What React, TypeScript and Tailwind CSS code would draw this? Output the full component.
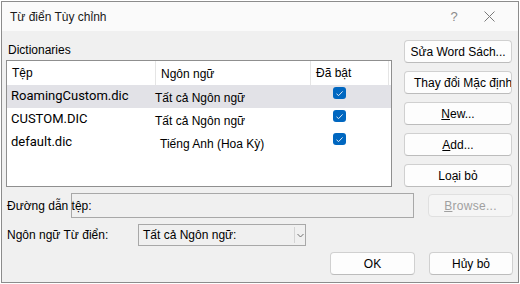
import React from "react";

function Check() {
  return (
    <div className="w-[13px] h-[12px] rounded-[3px] bg-[#0067c0] flex items-center justify-center">
      <svg width="9" height="7" viewBox="0 0 9 7">
        <path d="M1.5 3.8 L3.6 5.6 L7.6 1.4" fill="none" stroke="#dfe9f5" strokeWidth="1" />
      </svg>
    </div>
  );
}

function Btn({ children, className = "" }: { children: React.ReactNode; className?: string }) {
  return (
    <div
      className={
        "h-[23px] rounded-[4px] border border-[#d0d0d0] border-b-[#bcbcbc] bg-[#fdfdfd] flex items-center justify-center whitespace-nowrap overflow-hidden " +
        className
      }
    >
      {children}
    </div>
  );
}

const rows = [
  { file: "RoamingCustom.dic", lang: "Tất cả Ngôn ngữ", langPad: "pl-[0px]", sel: true },
  { file: "CUSTOM.DIC", lang: "Tất cả Ngôn ngữ", langPad: "pl-[0px]", sel: false },
  { file: "default.dic", lang: "Tiếng Anh (Hoa Kỳ)", langPad: "pl-[5px]", sel: false },
];

export default function App() {
  return (
    <div className="w-[520px] h-[284px] bg-white font-['Liberation_Sans',Arial,sans-serif] text-[12px] text-black">
      <div className="ml-px mt-px w-[518px] h-[282px] border border-[#8c8c8c] flex flex-col bg-[#f0f0f0]">
        {/* title bar */}
        <div className="h-[29px] bg-[#fafafa] flex items-center pl-[8px] shrink-0">
          <span className="text-[#1b1b1b]">Từ điển Tùy chỉnh</span>
          <div className="flex-1" />
          <div className="w-[20px] flex justify-center text-[13px] text-[#8a8a8a]">?</div>
          <div className="w-[20px] ml-[15px] mr-[19px] flex justify-center">
            <svg width="11" height="11" viewBox="0 0 11 11">
              <path d="M0.5 0.5 L10.5 10.5 M10.5 0.5 L0.5 10.5" stroke="#7a7a7a" strokeWidth="1" />
            </svg>
          </div>
        </div>

        {/* body */}
        <div className="flex-1 flex flex-col pl-[4px] pr-[5px] pt-[9px]">
          <div className="flex h-[147px]">
            <div className="w-[386px] flex flex-col">
              <div className="h-[20px] leading-[20px] pl-[2px]">Dictionaries</div>
              <div className="flex-1 border border-[#8f8f8f] bg-white flex flex-col">
                <div className="h-[24px] flex">
                  <div className="w-[149px] pl-[5px] flex items-center border-r border-[#e5e5e5]">Tệp</div>
                  <div className="w-[155px] pl-[5px] flex items-center pt-[1px] border-r border-[#e5e5e5]">Ngôn ngữ</div>
                  <div className="w-[78px] pl-[5px] flex items-center border-r border-[#e5e5e5]">Đã bật</div>
                </div>
                {rows.map((r) => (
                  <div key={r.file} className={"h-[23px] flex " + (r.sel ? "bg-[#e2e2e7]" : "")}>
                    <div className="w-[148px] pl-[4px] pt-[2px] font-['Roboto',sans-serif] text-[13px] leading-[18px] whitespace-nowrap overflow-hidden">
                      {r.file}
                    </div>
                    <div className={"w-[156px] pt-[5px] leading-[16px] whitespace-nowrap " + r.langPad}>{r.lang}</div>
                    <div className="w-[78px] pl-[22px] pt-[2px]">
                      <Check />
                    </div>
                  </div>
                ))}
              </div>
            </div>
            <div className="ml-[12px] w-[108px] flex flex-col gap-[8px]">
              <Btn>Sửa Word Sách...</Btn>
              <Btn className="justify-start pl-[9px]">Thay đổi Mặc định</Btn>
              <Btn>
                <span>
                  <span className="underline">N</span>ew...
                </span>
              </Btn>
              <Btn>
                <span>
                  <span className="underline">A</span>dd...
                </span>
              </Btn>
              <Btn>Loại bỏ</Btn>
            </div>
          </div>

          {/* path row */}
          <div className="mt-[6px] h-[25px] flex items-center">
            <div className="w-[65px] pl-[1px] shrink-0 whitespace-nowrap relative z-10">Đường dẫn tệp:</div>
            <div className="w-[343px] h-[25px] border border-[#a8a8a8] bg-[#f0f0f0]" />
            <div className="ml-[14px] w-[85px] h-[23px] rounded-[4px] border border-[#e0e0e0] bg-[#f5f5f5] flex items-center justify-center text-[#a0a0a0] tracking-[0.3px]">
              <span>
                <span className="underline">B</span>rowse...
              </span>
            </div>
          </div>

          {/* language row */}
          <div className="mt-[6px] h-[22px] flex items-center">
            <div className="w-[132px] pl-[1px] shrink-0 whitespace-nowrap">Ngôn ngữ Từ điển:</div>
            <div className="w-[168px] h-[22px] border border-[#a8a8a8] bg-[#f0f0f0] flex items-center">
              <div className="flex-1 pl-[4px] whitespace-nowrap">Tất cả Ngôn ngữ:</div>
              <div className="w-px h-[16px] bg-[#d4d4d4]" />
              <div className="w-[10px] flex justify-center">
                <svg width="7" height="5" viewBox="0 0 7 5">
                  <path d="M0.5 1 L3.5 4 L6.5 1" fill="none" stroke="#707070" strokeWidth="1" />
                </svg>
              </div>
            </div>
          </div>

          {/* OK row */}
          <div className="mt-[6px] flex justify-end gap-[14px]">
            <Btn className="w-[85px]">OK</Btn>
            <Btn className="w-[84px]">Hủy bỏ</Btn>
          </div>
        </div>
      </div>
    </div>
  );
}
